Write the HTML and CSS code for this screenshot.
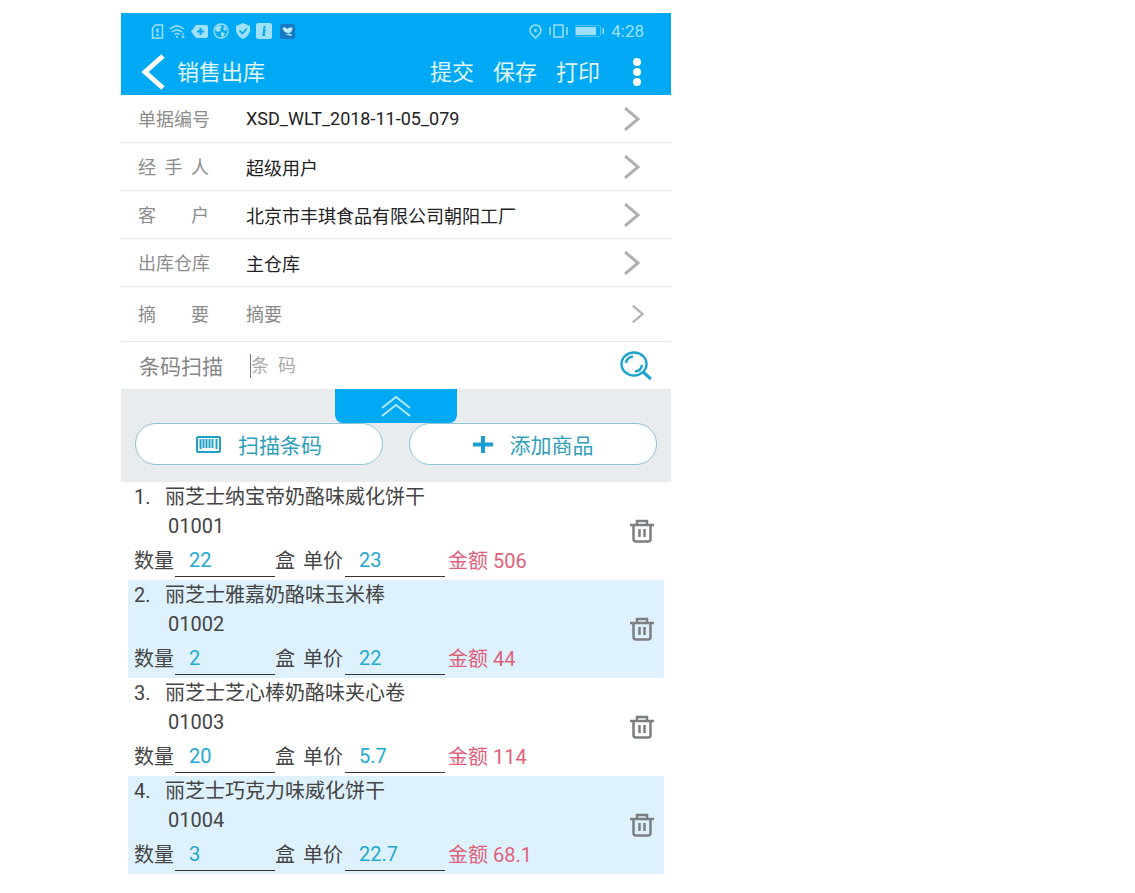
FILE: index.html
```html
<!DOCTYPE html>
<html lang="zh-CN">
<head>
    <meta charset="UTF-8">
    <meta name="viewport" content="width=device-width, initial-scale=1.0">
    <title>销售出库</title>
    <link rel="stylesheet" href="styles.css">
</head>
<body>
    <div class="app">
        <header class="header">
            <div class="status-bar">
                <div class="status-icons">
                    <svg width="13" height="15" viewBox="0 0 12 15" fill="none" stroke="currentColor" stroke-width="1.5"><path d="M4 1h7v13H1V4z"/><path d="M6 4.500v4M6 10v2" stroke-width="2"/></svg>
                    <svg width="17" height="15" viewBox="0 0 17 15" fill="none" stroke="currentColor" stroke-width="1.5"><path d="M1 5q7-6 14 0M3 8q5-4 10 0M5.500 10.500q2.500-2 5 0"/><circle cx="8" cy="13" r="1" fill="currentColor" stroke="none"/><path d="M14 9v4M12.500 12l1.500 2 1.500-2" stroke-width="1"/></svg>
                    <svg width="17" height="13" viewBox="0 0 17 13"><path d="M5 0h10q2 0 2 2v9q0 2-2 2H5L0 6.500z" fill="currentColor"/><path d="M9.500 3v7M6 6.500h7" stroke="#00a7f1" stroke-width="2"/></svg>
                    <svg width="17" height="16" viewBox="0 0 17 16"><circle cx="8" cy="8" r="7" fill="none" stroke="currentColor" stroke-width="1.300"/><path d="M3 4l4-2 2 2-2 2 1 2-3 1-3-2zM8 9l4 1-2 4-2-1zM11 3l3 3-2 2-2-2z" fill="currentColor"/></svg>
                    <svg width="16" height="16" viewBox="0 0 16 16"><path d="M8 0l7 3v5q-1 5-7 8-6-3-7-8V3z" fill="currentColor"/><path d="M4.500 7.500l3 3 4.500-5" fill="none" stroke="#00a7f1" stroke-width="1.600"/></svg>
                    <svg width="16" height="16" viewBox="0 0 16 16"><rect width="16" height="16" rx="2" fill="currentColor"/><path d="M7 6.500h1.500L7.500 12H9M8.500 3v2" fill="none" stroke="#00a7f1" stroke-width="2"/></svg>
                    <svg class="app-badge" width="15" height="15" viewBox="0 0 15 15"><rect width="15" height="15" rx="2" fill="#1579c4"/><path d="M2.500 4q2.500-2 5 1 2.500-3 5-1 0 4-4 5.500Q3 8 2.500 4zM5 10l6 2 1-2" fill="#b9ecff"/></svg>
                </div>
                <div class="status-info">
                    <svg width="13" height="15" viewBox="0 0 13 15" fill="none" stroke="currentColor" stroke-width="1.500"><path d="M6.500 14L2.500 10Q1 8 1 6.500a5.500 5.500 0 0 1 11 0Q12 8 10.500 10z"/><circle cx="6.500" cy="6.500" r="1.500" fill="currentColor" stroke="none"/></svg>
                    <svg width="21" height="14" viewBox="0 0 21 14" fill="none" stroke="currentColor" stroke-width="1.500"><path d="M6 1h9v12H6zM2 3v8M19 3v8"/></svg>
                    <svg width="30" height="12" viewBox="0 0 30 12"><rect x=".5" y=".5" width="25" height="11" rx="1" fill="none" stroke="currentColor" opacity=".5"/><path d="M1 2h20v8H1zM27.500 3h1.500v6h-1.500z" fill="currentColor"/></svg>
                    <span>4:28</span>
                </div>
            </div>
            <div class="title-bar">
                <button class="back-btn" aria-label="返回">
                    <svg width="24" height="36" viewBox="0 0 24 36" fill="none" stroke="#fff" stroke-width="5"><path d="M22 2L4 18l18 16"/></svg>
                </button>
                <h1>销售出库</h1>
                <button class="action-btn">提交</button>
                <button class="action-btn">保存</button>
                <button class="action-btn">打印</button>
                <button class="more-btn" aria-label="更多">
                    <svg width="10" height="30" viewBox="0 0 10 30" fill="#fff"><circle cx="5" cy="5" r="4"/><circle cx="5" cy="15" r="4"/><circle cx="5" cy="25" r="4"/></svg>
                </button>
            </div>
        </header>

        <main>
            <a href="#" class="row">
                <span class="row-label">单据编号</span>
                <span class="row-value">XSD_WLT_2018-11-05_079</span>
                <svg class="arrow" viewBox="0 0 16 24"><path d="M1 1l13 11L1 23"/></svg>
            </a>
            <a href="#" class="row">
                <span class="row-label">经手人</span>
                <span class="row-value">超级用户</span>
                <svg class="arrow" viewBox="0 0 16 24"><path d="M1 1l13 11L1 23"/></svg>
            </a>
            <a href="#" class="row">
                <span class="row-label">客户</span>
                <span class="row-value">北京市丰琪食品有限公司朝阳工厂</span>
                <svg class="arrow" viewBox="0 0 16 24"><path d="M1 1l13 11L1 23"/></svg>
            </a>
            <a href="#" class="row">
                <span class="row-label">出库仓库</span>
                <span class="row-value">主仓库</span>
                <svg class="arrow" viewBox="0 0 16 24"><path d="M1 1l13 11L1 23"/></svg>
            </a>
            <div class="row row-note">
                <label class="row-label" for="note">摘要</label>
                <input class="row-value" type="text" id="note" placeholder="摘要">
                <svg class="arrow" viewBox="0 0 16 24"><path d="M1 1l13 11L1 23"/></svg>
            </div>
            <div class="row row-scan">
                <label for="barcode">条码扫描</label>
                <input type="text" id="barcode" placeholder="条&nbsp; 码">
                <button class="search-btn" aria-label="搜索">
                    <svg width="32" height="30" viewBox="0 0 32 30" fill="none" stroke="#1fa3cf"><ellipse cx="14" cy="13" rx="12.500" ry="11.500" stroke-width="2.500"/><path d="M23 21l8 7" stroke-width="3"/><path d="M6 12q1-6 7-6.500M22 14q-1 6-7 6.500" stroke-width="2.500"/></svg>
                </button>
            </div>

            <section class="toolbar">
                <button class="collapse-btn" aria-label="收起">
                    <svg width="30" height="22" viewBox="0 0 30 22" fill="none" stroke="#b5e8fc" stroke-width="2"><path d="M1 13L15 2l14 11M1 21l14-11 14 11"/></svg>
                </button>
                <div class="toolbar-buttons">
                    <button class="pill-btn">
                        <svg width="25" height="17" viewBox="0 0 25 17" fill="none" stroke="#1fa0c6"><rect x="1" y="1" width="23" height="15" rx="1" stroke-width="2"/><path d="M4.500 3v10M7.500 3v9M10.500 3v9M13.500 3v9M16.500 3v9M20.500 3v10" stroke-width="2"/></svg>
                        扫描条码
                    </button>
                    <button class="pill-btn">
                        <svg width="20" height="17" viewBox="0 0 20 17" stroke="#1a9fd4" stroke-width="4"><path d="M10 0v17M0 8.500h20"/></svg>
                        添加商品
                    </button>
                </div>
            </section>

            <ul class="item-list" id="itemList"></ul>
        </main>
    </div>

    <script>
        const items = [
            { name: '丽芝士纳宝帝奶酪味威化饼干', code: '01001', qty: '22', unit: '盒', price: '23', amount: '506' },
            { name: '丽芝士雅嘉奶酪味玉米棒', code: '01002', qty: '2', unit: '盒', price: '22', amount: '44' },
            { name: '丽芝士芝心棒奶酪味夹心卷', code: '01003', qty: '20', unit: '盒', price: '5.7', amount: '114' },
            { name: '丽芝士巧克力味威化饼干', code: '01004', qty: '3', unit: '盒', price: '22.7', amount: '68.1' }
        ];

        document.getElementById('itemList').innerHTML = items.map((item, i) => `
            <li class="item">
                <div class="item-info">
                    <div class="item-name"><span class="item-no">${i + 1}.</span>${item.name}</div>
                    <div class="item-code">${item.code}</div>
                    <div class="item-fields">
                        <label for="qty${i}">数量</label>
                        <input type="text" id="qty${i}" value="${item.qty}">
                        <span class="unit">${item.unit}</span>
                        <label for="price${i}">单价</label>
                        <input type="text" id="price${i}" value="${item.price}">
                        <span class="amount">金额 ${item.amount}</span>
                    </div>
                </div>
                <button class="delete-btn" aria-label="删除">
                    <svg width="24" height="24" viewBox="0 0 24 24" fill="none" stroke="#7b7f82" stroke-width="2.500"><path d="M0 6h24M7 5V2h10v3M3.500 6v14q0 2.500 2.500 2.500h12q2.500 0 2.500-2.500V6M9.500 10v8M14.500 10v8"/></svg>
                </button>
            </li>
        `).join('');
    </script>
</body>
</html>
```
FILE: styles.css
```css
* {
    margin: 0;
    padding: 0;
    box-sizing: border-box;
}

body {
    padding: 13px 121px;
    background-color: #fff;
    font-family: Roboto, 'Noto Sans CJK SC', sans-serif;
    font-size: 20px;
    color: #444;
}

button, input {
    font: inherit;
    color: inherit;
    border: none;
    background: none;
    outline: none;
}

button {
    cursor: pointer;
}

svg {
    display: block;
    flex-shrink: 0;
}

.app {
    width: 100%;
    max-width: 550px;
}

/* Header */
.header {
    background-color: #00a9f4;
    color: #e2f6fe;
}

.status-bar {
    height: 36px;
    padding: 0 27px 0 30px;
    display: flex;
    justify-content: space-between;
    align-items: center;
    color: #9fe0fb;
    font-size: 17px;
}

.status-icons, .status-info {
    display: flex;
    align-items: center;
    gap: 5px;
}

.status-info {
    gap: 6px;
}

.app-badge {
    margin-left: 3px;
}

.title-bar {
    height: 46px;
    padding: 0 29px 0 20px;
    display: flex;
    align-items: center;
    font-size: 22px;
}

.title-bar h1, .action-btn {
    padding-bottom: 4px;
}

.title-bar h1 {
    flex: 1;
    margin-left: 12px;
    font-size: 22px;
    font-weight: normal;
}

.action-btn {
    margin-right: 19px;
}

.more-btn {
    margin-left: 13px;
}

/* Form rows */
.row {
    height: 48px;
    padding: 0 31px 0 17px;
    display: flex;
    align-items: center;
    border-bottom: 1px solid #e9ebec;
    color: #222;
    font-size: 18px;
    text-decoration: none;
}

.row-label {
    width: 71px;
    margin-right: 37px;
    padding-bottom: 2px;
    color: #8c8c8c;
    text-align-last: justify;
    white-space: nowrap;
}

.row-value {
    flex: 1;
    min-width: 0;
}

.arrow {
    width: 16px;
    height: 24px;
    fill: none;
    stroke: #b0b0b0;
    stroke-width: 3;
}

.row-note {
    height: 55px;
    padding-right: 27px;
}

.row-note .arrow {
    width: 12px;
    height: 18px;
}

.row input::placeholder {
    color: #888;
    opacity: 1;
}

.row-scan {
    height: 47px;
    padding: 0 19px 0 18px;
    border-bottom: none;
}

.row-scan label {
    width: 111px;
    padding-bottom: 2px;
    font-size: 21px;
    color: #858585;
}

.row-scan input {
    flex: 1;
    min-width: 0;
    height: 24px;
    border-left: 1px solid #777;
}

.row-scan input::placeholder {
    color: #aaa;
}

/* Toolbar */
.toolbar {
    padding: 0 14px 17px;
    background-color: #e8ecee;
}

.collapse-btn {
    width: 122px;
    height: 34px;
    margin: 0 auto;
    display: flex;
    justify-content: center;
    align-items: center;
    background-color: #00a9f4;
    border-radius: 0 0 8px 8px;
}

.toolbar-buttons {
    display: flex;
    gap: 26px;
}

.pill-btn {
    flex: 1;
    height: 42px;
    display: flex;
    justify-content: center;
    align-items: center;
    gap: 17px;
    background-color: #fff;
    border: 1px solid #8cc6d4;
    border-radius: 21px;
    color: #2f9fba;
    font-size: 21px;
}

/* Item list */
.item-list {
    padding: 0 7px;
    list-style: none;
}

.item {
    height: 98px;
    padding: 0 10px 0 6px;
    display: flex;
    align-items: center;
}

.item:nth-child(even) {
    background-color: #def2fe;
}

.item-info {
    flex: 1;
    height: 98px;
}

.item-name {
    display: flex;
    line-height: 30px;
}

.item-no {
    width: 31px;
}

.item-code {
    padding-left: 34px;
    line-height: 28px;
}

.item-fields {
    display: flex;
    line-height: 42px;
}

.item-fields label {
    width: 41px;
}

.item-fields input {
    width: 100px;
    height: 37px;
    padding: 4px 0 0 14px;
    border-bottom: 1px solid #333;
    color: #22a9cf;
}

.item-fields .unit {
    width: 28px;
}

.item-fields .unit + label {
    width: 42px;
}

.amount {
    margin-left: 3px;
    color: #e0607a;
}
```
